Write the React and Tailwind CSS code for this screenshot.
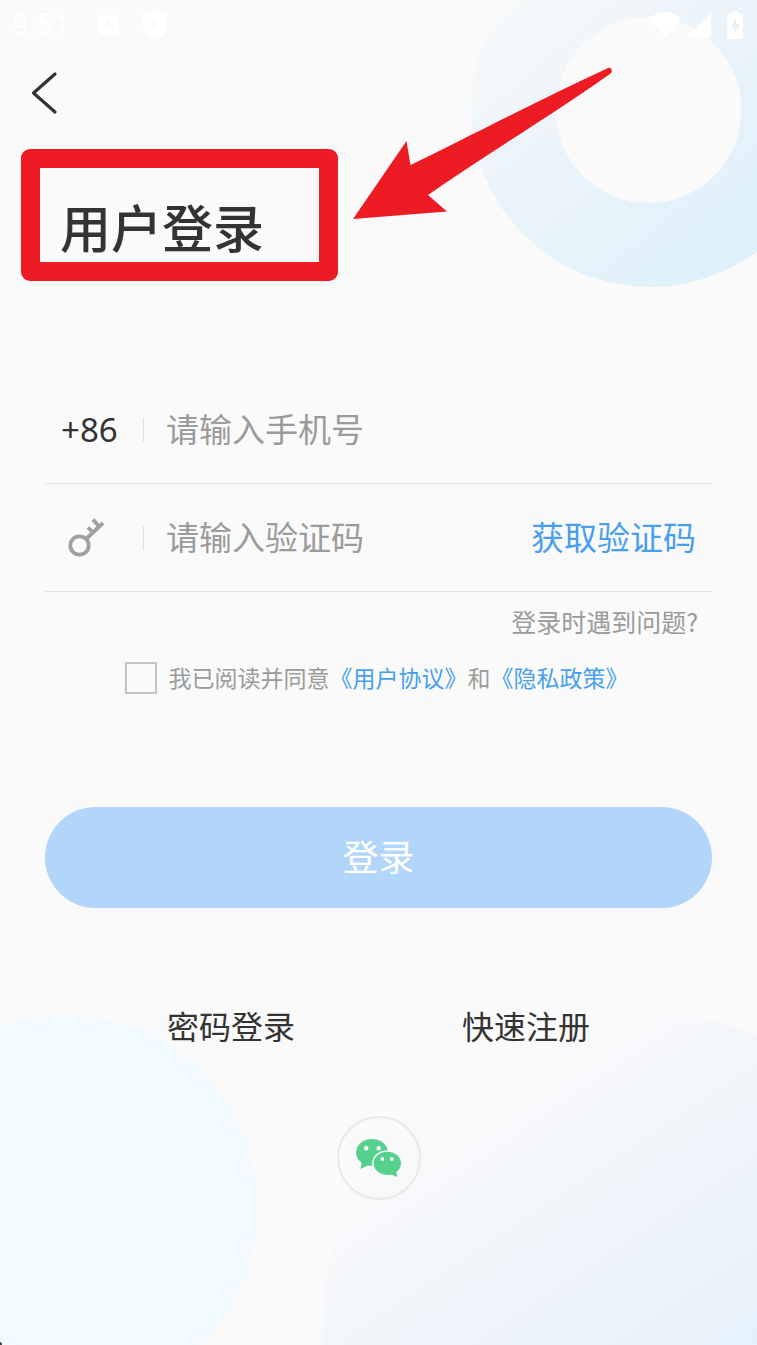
import React, { useState } from "react";

function StatusBar() {
  return (
    <div className="flex h-[50px] items-center justify-between pl-3 pr-[14px] text-white">
      <div className="flex items-center">
        <span className="font-[Roboto,sans-serif] text-[30px] leading-8">9:51</span>
        <svg className="ml-7 h-[22px] w-[22px]" viewBox="0 0 22 22" fill="none">
          <rect x="1" y="1" width="20" height="20" rx="2" fill="currentColor" />
          <path d="M7 16l4-10 4 10M8.500 12.500h5" stroke="#fafafa" strokeWidth="2" />
        </svg>
        <svg className="ml-[22px] h-[30px] w-[26px]" viewBox="0 0 26 30">
          <path d="M13 1l12 4v10c0 7-5 12-12 14C6 27 1 22 1 15V5z" fill="currentColor" />
          <path d="M9.500 9.500v10l8-5z" fill="#fafafa" />
        </svg>
      </div>
      <div className="flex items-center">
        <svg className="h-[26px] w-8" viewBox="0 0 32 26">
          <path d="M0 6Q16-6 32 6L16 25z" fill="currentColor" />
        </svg>
        <svg className="ml-1.5 h-[26px] w-6" viewBox="0 0 24 26">
          <path d="M24 1v24H0z" fill="currentColor" />
        </svg>
        <svg className="ml-4 h-[29px] w-4" viewBox="0 0 16 29">
          <path d="M5 0h6v3h4q1 0 1 1v23q0 1-1 1H1q-1 0-1-1V4q0-1 1-1h4z" fill="currentColor" />
          <path d="M9 7l-5 9h3.500v7l5-10H9z" fill="#e4eff6" />
        </svg>
      </div>
    </div>
  );
}

function Background() {
  return (
    <div className="pointer-events-none absolute inset-0 -z-10" aria-hidden="true">
      <svg className="absolute right-0 top-0 h-[288px] w-[287px]" viewBox="0 0 287 288">
        <defs>
          <linearGradient id="ring" gradientUnits="userSpaceOnUse" x1="30" y1="0" x2="250" y2="260">
            <stop offset="0" stopColor="#f7f9fa" />
            <stop offset="0.5" stopColor="#eaf3fa" />
            <stop offset="1" stopColor="#dff1fa" />
          </linearGradient>
        </defs>
        <circle cx="180" cy="108" r="179" fill="url(#ring)" />
        <circle cx="178.500" cy="110" r="93" fill="#fafafa" />
      </svg>
      <svg className="absolute bottom-0 left-0 h-[332px] w-[260px]" viewBox="0 0 260 332">
        <circle cx="65" cy="195" r="193" fill="#f2f9ff" />
        <path d="M0 329h1v1h1v2H0z" fill="#444" />
      </svg>
      <svg className="absolute bottom-0 right-0 h-[336px] w-[436px]" viewBox="0 0 436 336">
        <defs>
          <linearGradient id="blob" gradientUnits="userSpaceOnUse" x1="130" y1="60" x2="370" y2="420">
            <stop offset="0" stopColor="#fafafa" />
            <stop offset="0.55" stopColor="#eff4fb" />
            <stop offset="1" stopColor="#e2f0fa" />
          </linearGradient>
        </defs>
        <circle cx="314" cy="314" r="312" fill="url(#blob)" />
      </svg>
    </div>
  );
}

function KeyIcon() {
  return (
    <svg className="ml-1.5 h-10 w-[38px]" viewBox="0 0 38 40" fill="none" stroke="#a0a0a0" strokeWidth="3.800">
      <circle cx="12.500" cy="27.500" r="9.200" />
      <path d="M19 21L36 5M26 1.500l6 7M21 9.500l5 5" />
    </svg>
  );
}

function WechatIcon() {
  return (
    <svg className="h-[38px] w-[46px]" viewBox="0 0 46 38">
      <g fill="#57d08f">
        <ellipse cx="16" cy="13.500" rx="16" ry="13.500" />
        <path d="M6 22l-1.500 8 8-4z" />
      </g>
      <g fill="#57d08f" stroke="#f8fafb" strokeWidth="1.500">
        <ellipse cx="31.300" cy="24.300" rx="14.400" ry="12.400" />
      </g>
      <path d="M35 35.500l6.500 2.500-1.500-6z" fill="#57d08f" />
      <g fill="#fafafa">
        <circle cx="10.200" cy="9.300" r="2.200" />
        <circle cx="22.700" cy="9.300" r="2.200" />
        <circle cx="26.300" cy="20" r="1.900" />
        <circle cx="35.800" cy="20" r="1.900" />
      </g>
    </svg>
  );
}

export default function App() {
  const [phone, setPhone] = useState("");
  const [code, setCode] = useState("");
  const [agreed, setAgreed] = useState(false);

  return (
    <div className="relative isolate min-h-screen overflow-hidden bg-[#fafafa] pb-20 font-['Noto_Sans_CJK_SC',sans-serif] text-[#333]">
      <Background />
      <StatusBar />

      <nav className="flex h-[86px] items-center pl-[30px]">
        <button type="button" aria-label="返回">
          <svg className="h-11 w-7" viewBox="0 0 28 44" fill="none" stroke="#333" strokeWidth="3.200" strokeLinecap="round" strokeLinejoin="round">
            <path d="M25 3L3.500 22 25 41" />
          </svg>
        </button>
      </nav>

      {/* Title with highlight frame */}
      <div className="relative ml-[21px] mt-[13px] w-fit rounded-[9px] border-[19px] border-[#ed1c24] pb-1.5 pl-5 pr-[55px] pt-7">
        <h1 className="text-[51px] font-medium leading-[60px]">用户登录</h1>
        <svg className="absolute -top-[102px] left-[313px] h-[154px] w-[260px]" viewBox="0 0 260 154" fill="#ed1c24">
          <path d="M0 153L53.500 75l4 24C115 71 190 32 255 2c3-1.500 5.500 3 2.500 5.500C210 42 140 84 75 129l19 16.500z" />
        </svg>
      </div>

      <form className="px-[45px] pt-[95px]" onSubmit={(e) => e.preventDefault()}>
        <div className="flex h-[108px] items-center border-b border-[#dfe1e5] px-4">
          <label htmlFor="phone" className="w-[82px] font-['Noto_Sans',sans-serif] text-[33px] leading-10">+86</label>
          <div className="h-6 w-px bg-[#dfe1e5]" />
          <input
            id="phone"
            type="tel"
            value={phone}
            onChange={(e) => setPhone(e.target.value)}
            placeholder="请输入手机号"
            className="min-w-0 flex-1 bg-transparent pb-1 pl-[22px] text-[33px] leading-10 outline-none placeholder:text-[#9b9b9b]"
          />
        </div>

        <div className="flex h-[108px] items-center border-b border-[#dfe1e5] px-4">
          <label htmlFor="code" className="w-[82px]" aria-label="验证码">
            <KeyIcon />
          </label>
          <div className="h-6 w-px bg-[#dfe1e5]" />
          <input
            id="code"
            type="text"
            value={code}
            onChange={(e) => setCode(e.target.value)}
            placeholder="请输入验证码"
            className="min-w-0 flex-1 bg-transparent pb-1 pl-[22px] text-[33px] leading-10 outline-none placeholder:text-[#9b9b9b]"
          />
          <button type="button" className="shrink-0 pb-1 text-[33px] leading-10 text-[#489ff0]">获取验证码</button>
        </div>

        <div className="flex h-[62px] items-center justify-end pb-1 pr-[14px]">
          <a href="#help" className="text-[25px] leading-8 text-[#9b9b9b]">登录时遇到问题?</a>
        </div>

        <div className="flex h-12 items-center justify-center pr-1 text-[23px] leading-8 text-[#9b9b9b]">
          <input
            id="agree"
            type="checkbox"
            checked={agreed}
            onChange={(e) => setAgreed(e.target.checked)}
            className="mr-3 h-8 w-8 shrink-0 appearance-none border-2 border-[#c4c4c4] checked:bg-[#489ff0]"
          />
          <div className="pb-0.5">
            <label htmlFor="agree">我已阅读并同意</label>
            <a href="#terms" className="text-[#489ff0]">《用户协议》</a>
            <span>和</span>
            <a href="#privacy" className="text-[#489ff0]">《隐私政策》</a>
          </div>
        </div>

        <button type="submit" className="mt-[105px] h-[101px] w-full rounded-full bg-[#b2d6f9] pb-1.5 text-[36px] leading-10 text-white">
          登录
        </button>
      </form>

      <div className="mt-[93px] flex h-12 items-center justify-center gap-[167px] text-[32px] leading-10">
        <a href="#password">密码登录</a>
        <a href="#register">快速注册</a>
      </div>

      <div className="mt-[67px] flex justify-center">
        <button type="button" aria-label="微信登录" className="flex h-[84px] w-[84px] items-center justify-center rounded-full border-2 border-[#e8e9eb]">
          <WechatIcon />
        </button>
      </div>
    </div>
  );
}
